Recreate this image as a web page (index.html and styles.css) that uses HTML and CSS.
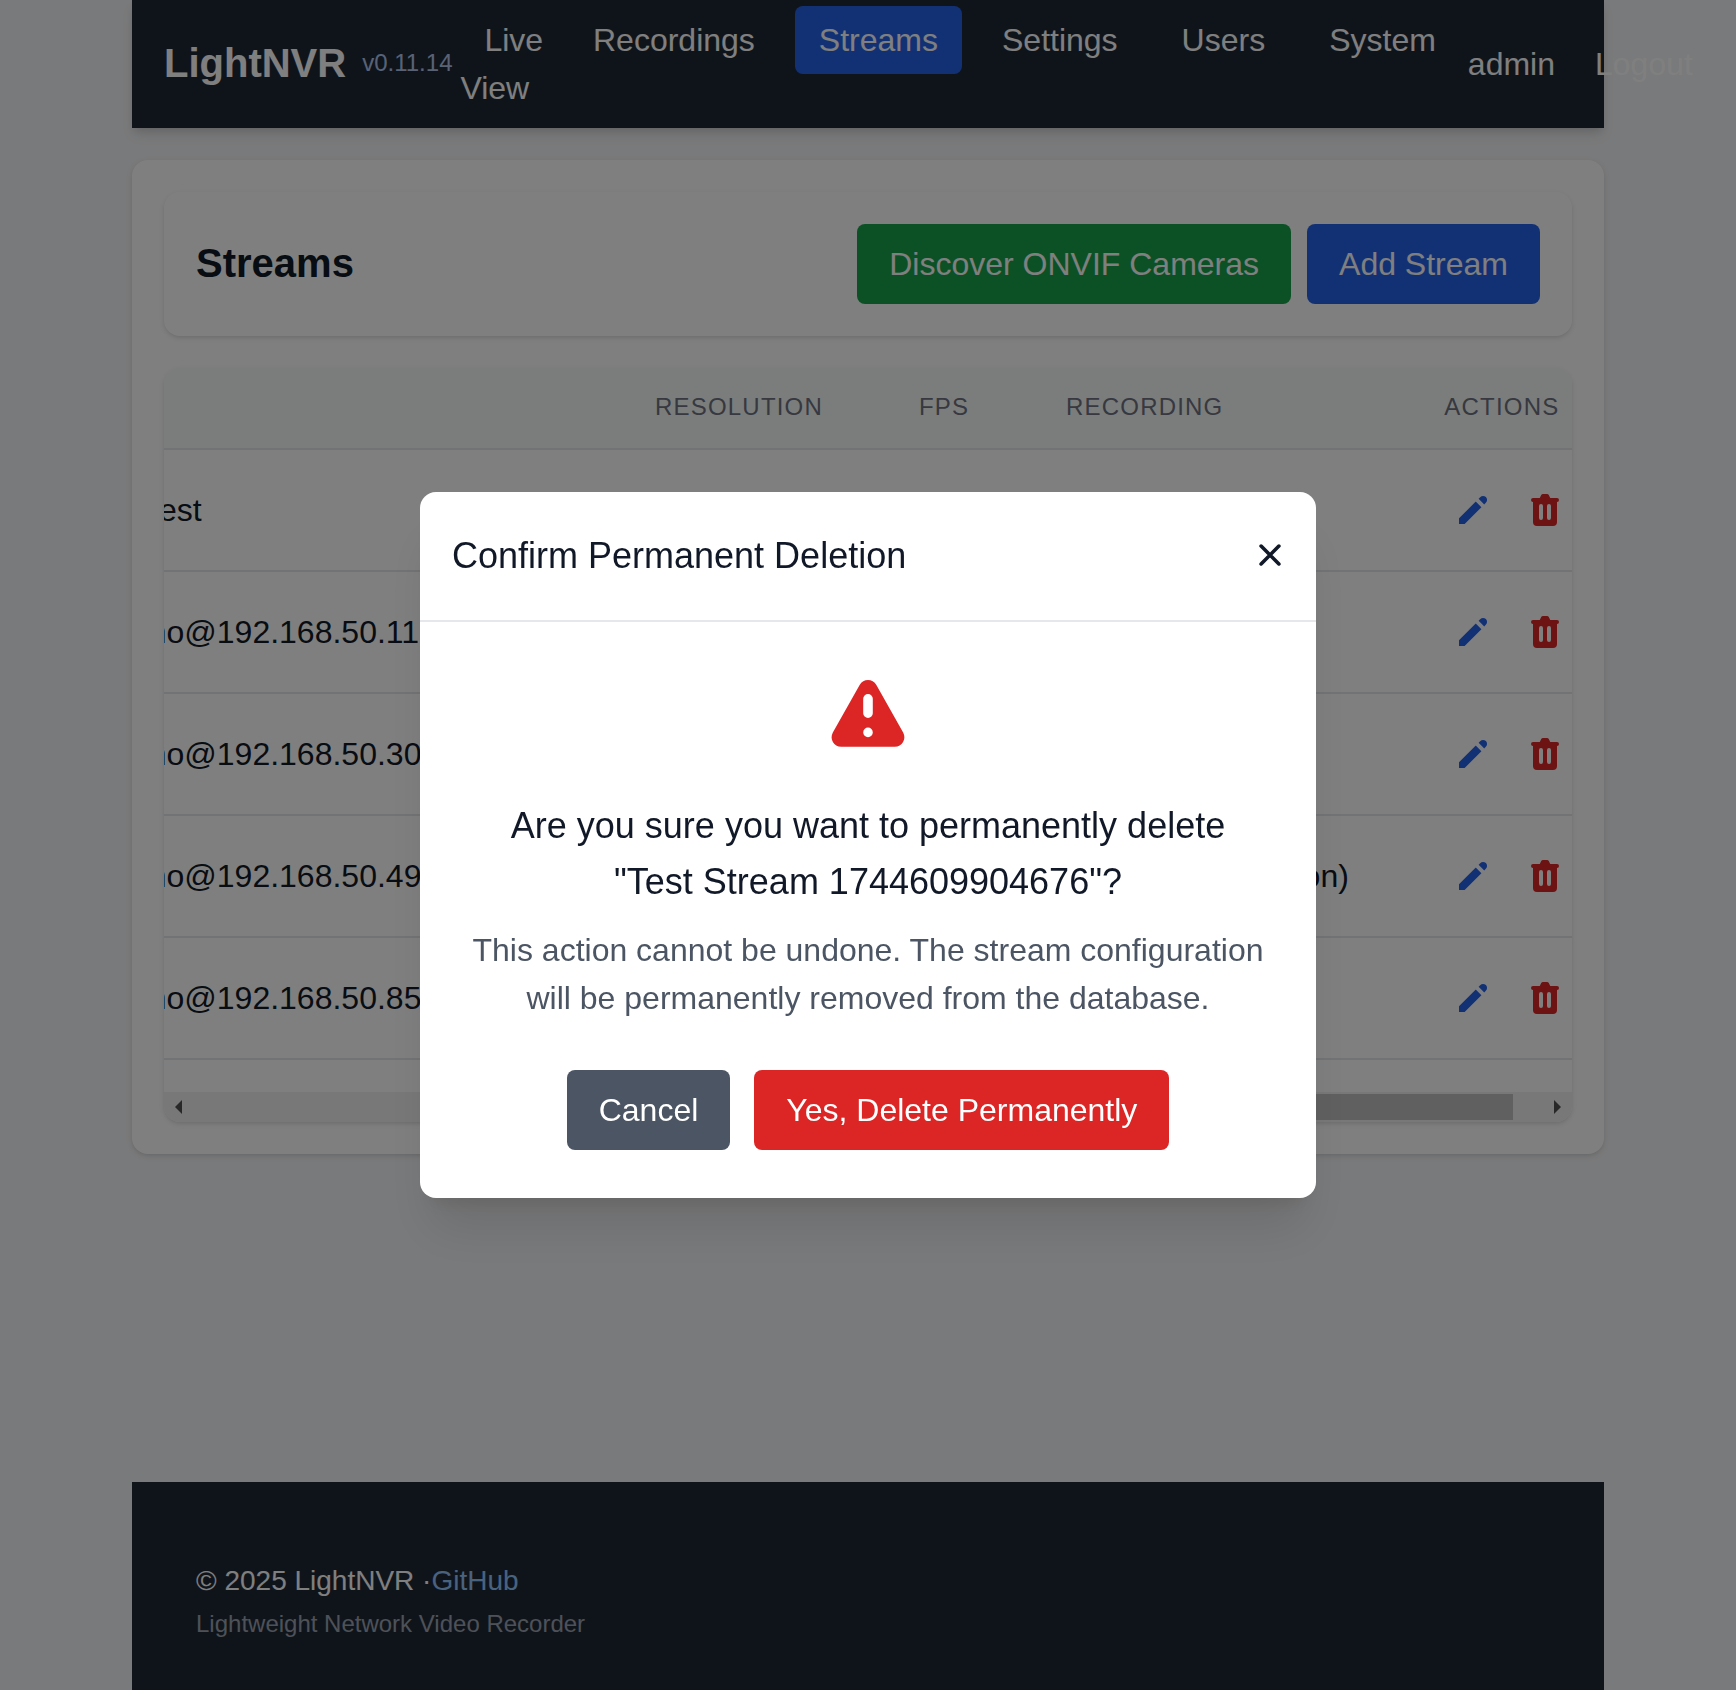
FILE: index.html
```html
<!DOCTYPE html>
<html lang="en">
<head>
<meta charset="utf-8">
<title>LightNVR - Streams</title>
<link rel="stylesheet" href="styles.css">
</head>
<body>
<svg class="sprite" aria-hidden="true">
  <symbol id="edit" viewBox="0 0 20 20"><path d="M13.586 3.586a2 2 0 112.828 2.828l-.793.793-2.828-2.828.793-.793zM11.379 5.793L3 14.172V17h2.828l8.38-8.379-2.83-2.828z"/></symbol>
  <symbol id="trash" viewBox="0 0 20 20"><path fill-rule="evenodd" d="M9 2a1 1 0 00-.894.553L7.382 4H4a1 1 0 000 2v10a2 2 0 002 2h8a2 2 0 002-2V6a1 1 0 100-2h-3.382l-.724-1.447A1 1 0 0011 2H9zM7 8a1 1 0 012 0v6a1 1 0 11-2 0V8zm5-1a1 1 0 00-1 1v6a1 1 0 102 0V8a1 1 0 00-1-1z"/></symbol>
</svg>
<div class="page">
  <header class="header">
    <div class="brand"><h1>LightNVR</h1><span class="version">v0.11.14</span></div>
    <ul class="nav">
      <li class="narrow"><a>Live View</a></li>
      <li><a>Recordings</a></li>
      <li><a class="active">Streams</a></li>
      <li><a>Settings</a></li>
      <li><a>Users</a></li>
      <li><a>System</a></li>
    </ul>
    <div class="user"><span>admin</span><a>Logout</a></div>
  </header>
  <main class="panel">
    <section class="toolbar">
      <h2>Streams</h2>
      <div class="toolbar-actions">
        <button class="btn green">Discover ONVIF Cameras</button>
        <button class="btn blue">Add Stream</button>
      </div>
    </section>
    <section class="table">
      <div class="row head"><span></span><span>Resolution</span><span>FPS</span><span>Recording</span><span class="last">Actions</span></div>
      <div class="row"><span class="url short">test</span><span></span><span></span><span>Enabled</span><span class="icons"><svg class="edit"><use href="#edit"/></svg><svg class="trash"><use href="#trash"/></svg></span></div>
      <div class="row"><span class="url">thingino@192.168.50.11</span><span></span><span></span><span>Enabled</span><span class="icons"><svg class="edit"><use href="#edit"/></svg><svg class="trash"><use href="#trash"/></svg></span></div>
      <div class="row"><span class="url">thingino@192.168.50.30</span><span></span><span></span><span>Enabled</span><span class="icons"><svg class="edit"><use href="#edit"/></svg><svg class="trash"><use href="#trash"/></svg></span></div>
      <div class="row"><span class="url">thingino@192.168.50.49</span><span></span><span></span><span>Enabled (Detection)</span><span class="icons"><svg class="edit"><use href="#edit"/></svg><svg class="trash"><use href="#trash"/></svg></span></div>
      <div class="row"><span class="url">thingino@192.168.50.85</span><span></span><span></span><span>Enabled</span><span class="icons"><svg class="edit"><use href="#edit"/></svg><svg class="trash"><use href="#trash"/></svg></span></div>
      <div class="scrollbar">
        <svg class="arrow" viewBox="0 0 7 14"><path d="M7 0v14L0 7z"/></svg>
        <div class="thumb"></div>
        <svg class="arrow" viewBox="0 0 7 14"><path d="M0 0v14l7-7z"/></svg>
      </div>
    </section>
  </main>
  <footer class="footer">
    <p class="copy">© 2025 LightNVR ·<a>GitHub</a></p>
    <p class="tagline">Lightweight Network Video Recorder</p>
  </footer>
</div>
<div class="overlay">
  <div class="modal">
    <div class="modal-head">
      <h3>Confirm Permanent Deletion</h3>
      <svg class="close" viewBox="0 0 40 40"><path d="M11.1 11.1l17.8 17.8M28.9 11.1L11.1 28.9"/></svg>
    </div>
    <div class="modal-body">
      <svg class="warning" viewBox="0 0 20 20"><path fill-rule="evenodd" d="M8.257 3.099c.765-1.36 2.722-1.36 3.486 0l5.58 9.92c.75 1.334-.213 2.98-1.742 2.98H4.42c-1.53 0-2.493-1.646-1.743-2.98l5.58-9.92zM11 13a1 1 0 11-2 0 1 1 0 012 0zm-1-8a1 1 0 00-1 1v3a1 1 0 002 0V6a1 1 0 00-1-1z"/></svg>
      <p class="question">Are you sure you want to permanently delete "Test Stream 1744609904676"?</p>
      <p class="note">This action cannot be undone. The stream configuration will be permanently removed from the database.</p>
      <div class="modal-actions">
        <button class="btn gray">Cancel</button>
        <button class="btn red">Yes, Delete Permanently</button>
      </div>
    </div>
  </div>
</div>
</body>
</html>
```
FILE: styles.css
```css
* { box-sizing: border-box; margin: 0; padding: 0; }
html, body { height: 100%; overflow: hidden; }
body {
  background: #f3f4f6;
  color: #111827;
  font: 32px/48px "Liberation Sans", Arial, sans-serif;
}
.sprite { display: none; }
.page { width: 1472px; height: 100%; margin: 0 auto; display: flex; flex-direction: column; }
.header {
  flex: none;
  display: flex;
  align-items: center;
  height: 128px;
  padding: 0 32px;
  background: #1f2937;
  color: #fff;
  box-shadow: 0 8px 12px -2px rgba(0,0,0,.1), 0 4px 8px -2px rgba(0,0,0,.1);
  white-space: nowrap;
}
.brand { display: flex; flex: none; align-items: center; gap: 16px; width: 296.4px; padding-bottom: 2px; }
.brand h1 { font-size: 40px; line-height: 56px; }
.version { font-size: 24px; line-height: 32px; color: #b3c5ea; }
.nav { display: flex; flex: none; gap: 16px; list-style: none; }
.nav a { padding: 16px 24px; border-radius: 8px; }
.nav .narrow { width: 92.6px; white-space: normal; }
.nav .narrow a { padding-right: 0; }
.nav .active { background: #2563eb; }
.user { display: flex; flex: none; gap: 40px; margin-left: 8px; }
.panel {
  flex: none;
  margin-top: 32px;
  padding: 32px;
  border-radius: 16px;
  background: #fff;
  box-shadow: 0 2px 6px rgba(0,0,0,.1), 0 2px 4px -2px rgba(0,0,0,.1);
}
.toolbar {
  display: flex;
  align-items: center;
  justify-content: space-between;
  padding: 32px;
  border-radius: 16px;
  box-shadow: 0 2px 6px rgba(0,0,0,.1), 0 2px 4px -2px rgba(0,0,0,.1);
}
.toolbar h2 { padding-bottom: 2px; font-size: 40px; line-height: 56px; }
.toolbar-actions { display: flex; gap: 16px; }
.btn { padding: 16px 32px; border: 0; border-radius: 8px; color: #fff; font: inherit; }
.green { background: #16a34a; }
.blue { background: #2563eb; }
.gray { background: #4b5563; }
.red { background: #dc2626; }
.table {
  margin-top: 32px;
  border-radius: 16px;
  overflow: hidden;
  box-shadow: 0 2px 6px rgba(0,0,0,.1), 0 2px 4px -2px rgba(0,0,0,.1);
}
.row {
  display: grid;
  grid-template-columns: 492px 263px 147px 300px 1fr;
  align-items: center;
  height: 122px;
  border-bottom: 2px solid #e5e7eb;
  white-space: nowrap;
}
.head {
  grid-template-columns: 491px 264px 147px 300px 1fr;
  height: 82px;
  padding-bottom: 2px;
  background: #f5fbf8;
  color: #6f7180;
  font-size: 24px;
  line-height: 32px;
  letter-spacing: 1.2px;
  text-transform: uppercase;
}
.last { padding-right: 12.6px; text-align: right; }
.url { margin-left: -91.8px; }
.url.short { margin-left: -14px; }
.icons { display: flex; justify-content: flex-end; gap: 32px; padding-right: 7px; }
.icons svg { width: 40px; height: 40px; }
.edit { fill: #2563eb; }
.trash { fill: #dc2626; }
.scrollbar {
  display: flex;
  align-items: center;
  height: 30px;
  margin-top: 32px;
  padding: 0 11px;
  background: #f1f1f1;
}
.arrow { width: 7px; height: 14px; fill: #505050; }
.thumb { width: 800px; height: 26px; margin: 0 41px 0 auto; background: #c1c1c1; }
.footer { flex: 1; margin-top: 328px; padding: 79px 64px 0; background: #1f2937; color: #fff; }
.copy { font-size: 28px; line-height: 40px; }
.copy a { color: #93c5fd; }
.tagline { margin-top: 7px; font-size: 24px; line-height: 32px; color: #9ca3af; }
.overlay {
  position: fixed;
  inset: 0;
  display: flex;
  align-items: center;
  justify-content: center;
  background: rgba(0,0,0,.5);
}
.modal {
  width: 896px;
  border-radius: 16px;
  background: #fff;
  box-shadow: 0 40px 50px -10px rgba(0,0,0,.1), 0 16px 20px -12px rgba(0,0,0,.1);
}
.modal-head {
  display: flex;
  align-items: center;
  justify-content: space-between;
  height: 130px;
  padding: 0 26px 0 32px;
  border-bottom: 2px solid #e5e7eb;
}
.modal-head h3 { font-size: 36px; line-height: 56px; font-weight: 400; }
.close { width: 40px; height: 40px; margin-bottom: 2px; fill: none; stroke: #111827; stroke-width: 3.6; stroke-linecap: round; }
.modal-body { padding: 48px; text-align: center; }
.warning { display: block; width: 96px; height: 96px; margin: 0 auto 32px; fill: #dc2626; }
.question { font-size: 36px; line-height: 56px; }
.note { margin-top: 16px; color: #4b5563; }
.modal-actions { display: flex; justify-content: center; gap: 24px; margin-top: 48px; }
```
